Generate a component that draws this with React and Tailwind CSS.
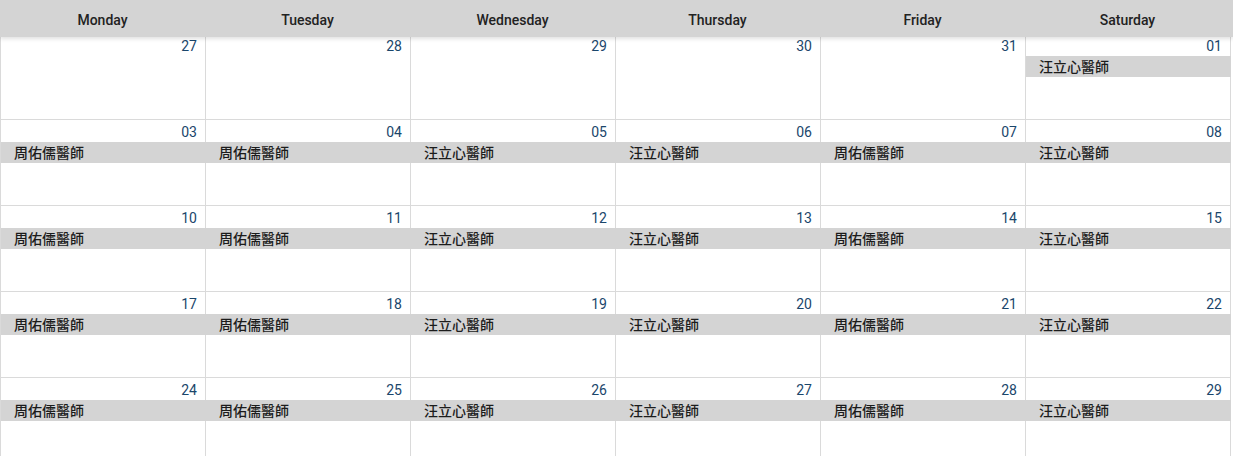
import React from 'react';

const days = ['Monday', 'Tuesday', 'Wednesday', 'Thursday', 'Friday', 'Saturday'];

const A = '周佑儒醫師';
const B = '汪立心醫師';

// each week: [date, doctor]
const weeks = [
  [['27'], ['28'], ['29'], ['30'], ['31'], ['01', B]],
  [['03', A], ['04', A], ['05', B], ['06', B], ['07', A], ['08', B]],
  [['10', A], ['11', A], ['12', B], ['13', B], ['14', A], ['15', B]],
  [['17', A], ['18', A], ['19', B], ['20', B], ['21', A], ['22', B]],
  [['24', A], ['25', A], ['26', B], ['27', B], ['28', A], ['29', B]],
];

const DayCell = ({ date, doctor }) => (
  <div className="h-[86px] border-r border-b border-[#dadada] bg-white">
    <div className="pt-[3px] pr-[8px] text-right text-[14px] leading-[19px] text-[#1a466b]">{date}</div>
    {doctor && (
      <div className="-mr-px h-[21px] bg-[#d4d4d4] pl-[13px] text-[14px] leading-[22px] font-medium text-[#1c1c1c]">
        {doctor}
      </div>
    )}
  </div>
);

export default function App() {
  return (
    <div
      className="h-[456px] w-[1233px] overflow-hidden bg-white"
      style={{ fontFamily: 'Roboto, "Noto Sans CJK TC", sans-serif' }}
    >
      <div className="relative z-10 flex h-[37px] w-full bg-[#d4d4d4] shadow-[0_2px_4px_rgba(0,0,0,0.12)]">
        {days.map((d) => (
          <div key={d} className="flex w-[205px] items-center justify-center pt-[4px] text-[14px] font-medium text-[#222]">
            {d}
          </div>
        ))}
      </div>
      <div className="-mt-[3px] w-[1231px] border-l border-[#dadada]">
        {weeks.map((week, i) => (
          <div key={i} className="grid grid-cols-[repeat(6,205px)]">
            {week.map(([date, doctor], j) => (
              <DayCell key={j} date={date} doctor={doctor} />
            ))}
          </div>
        ))}
      </div>
    </div>
  );
}
